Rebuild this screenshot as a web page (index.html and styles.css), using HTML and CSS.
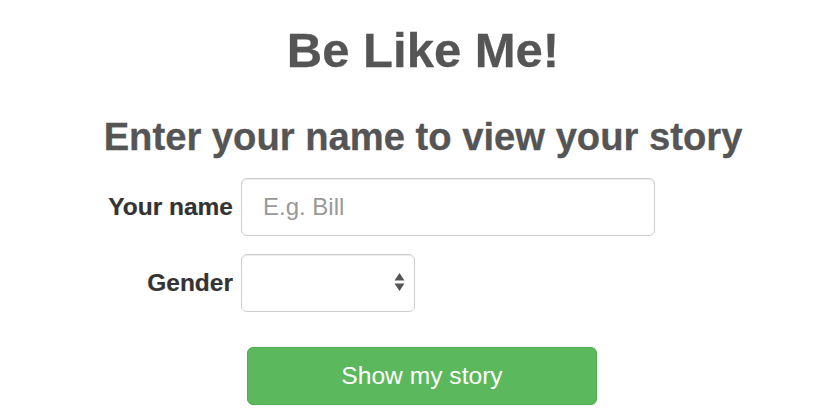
FILE: index.html
```html
<!DOCTYPE html>
<html>
<head>
<meta charset="utf-8">
<link rel="stylesheet" href="styles.css">
</head>
<body>
<div class="page">
  <h1 class="title">Be Like Me!</h1>
  <h2 class="subtitle">Enter your name to view your story</h2>
  <form class="form">
    <label class="label" for="name">Your name</label>
    <input class="input" id="name" type="text" placeholder="E.g. Bill">
    <label class="label label-gender" for="gender">Gender</label>
    <div class="select-wrap">
      <select class="select" id="gender"><option></option></select>
      <svg class="select-arrows" width="11" height="19" viewBox="0 0 11 19"><path d="M5.5 0 L10.5 7.5 L0.5 7.5 Z M0.5 10.5 L10.5 10.5 L5.5 18 Z" fill="#555"/></svg>
    </div>
    <div class="spacer"></div>
    <button class="btn" type="button">Show my story</button>
  </form>
</div>
</body>
</html>
```
FILE: styles.css
```css
html, body {
  margin: 0;
  padding: 0;
  background: #fff;
}
body {
  font-family: "Liberation Sans", Arial, Helvetica, sans-serif;
  width: 840px;
  height: 420px;
  overflow: hidden;
}
.page {
  display: flex;
  flex-direction: column;
  align-items: center;
  padding-left: 6px;
  padding-top: 22px;
}
.title {
  margin: 0;
  font-size: 49px;
  line-height: 56px;
  font-weight: bold;
  color: #555;
  -webkit-text-stroke: 0.3px #555;
}
.subtitle {
  margin: 37px 0 0;
  font-size: 38.2px;
  line-height: 44px;
  font-weight: bold;
  color: #555;
  -webkit-text-stroke: 0.3px #555;
}
.form {
  align-self: flex-start;
  margin: 19px 0 0 1px;
  display: grid;
  grid-template-columns: 226px 414px;
  column-gap: 8px;
  row-gap: 18px;
  align-items: center;
}
.label {
  justify-self: end;
  font-size: 24.5px;
  font-weight: bold;
  color: #333;
  -webkit-text-stroke: 0.2px #333;
}
.input {
  box-sizing: border-box;
  width: 414px;
  height: 58px;
  border: 1px solid #ccc;
  border-radius: 6px;
  padding: 0 21px;
  font-family: inherit;
  font-size: 24px;
  color: #555;
  outline: none;
  box-shadow: inset 0 1px 1px rgba(0,0,0,0.075);
}
.input::placeholder {
  color: #999;
}
.select-wrap {
  position: relative;
  width: 174px;
  height: 58px;
}
.select {
  -webkit-appearance: none;
  appearance: none;
  box-sizing: border-box;
  width: 174px;
  height: 58px;
  border: 1px solid #ccc;
  border-radius: 6px;
  background: #fff;
  font-family: inherit;
  font-size: 24px;
  outline: none;
  box-shadow: inset 0 1px 1px rgba(0,0,0,0.075);
}
.select-arrows {
  position: absolute;
  right: 10px;
  top: 19px;
  pointer-events: none;
}
.btn {
  margin-top: 17px;
  margin-left: 6px;
  box-sizing: border-box;
  width: 350px;
  height: 58px;
  background: #5cb85c;
  border: 1px solid #4cae4c;
  border-radius: 6px;
  color: #fff;
  font-family: inherit;
  font-size: 24.6px;
  cursor: pointer;
}
```
